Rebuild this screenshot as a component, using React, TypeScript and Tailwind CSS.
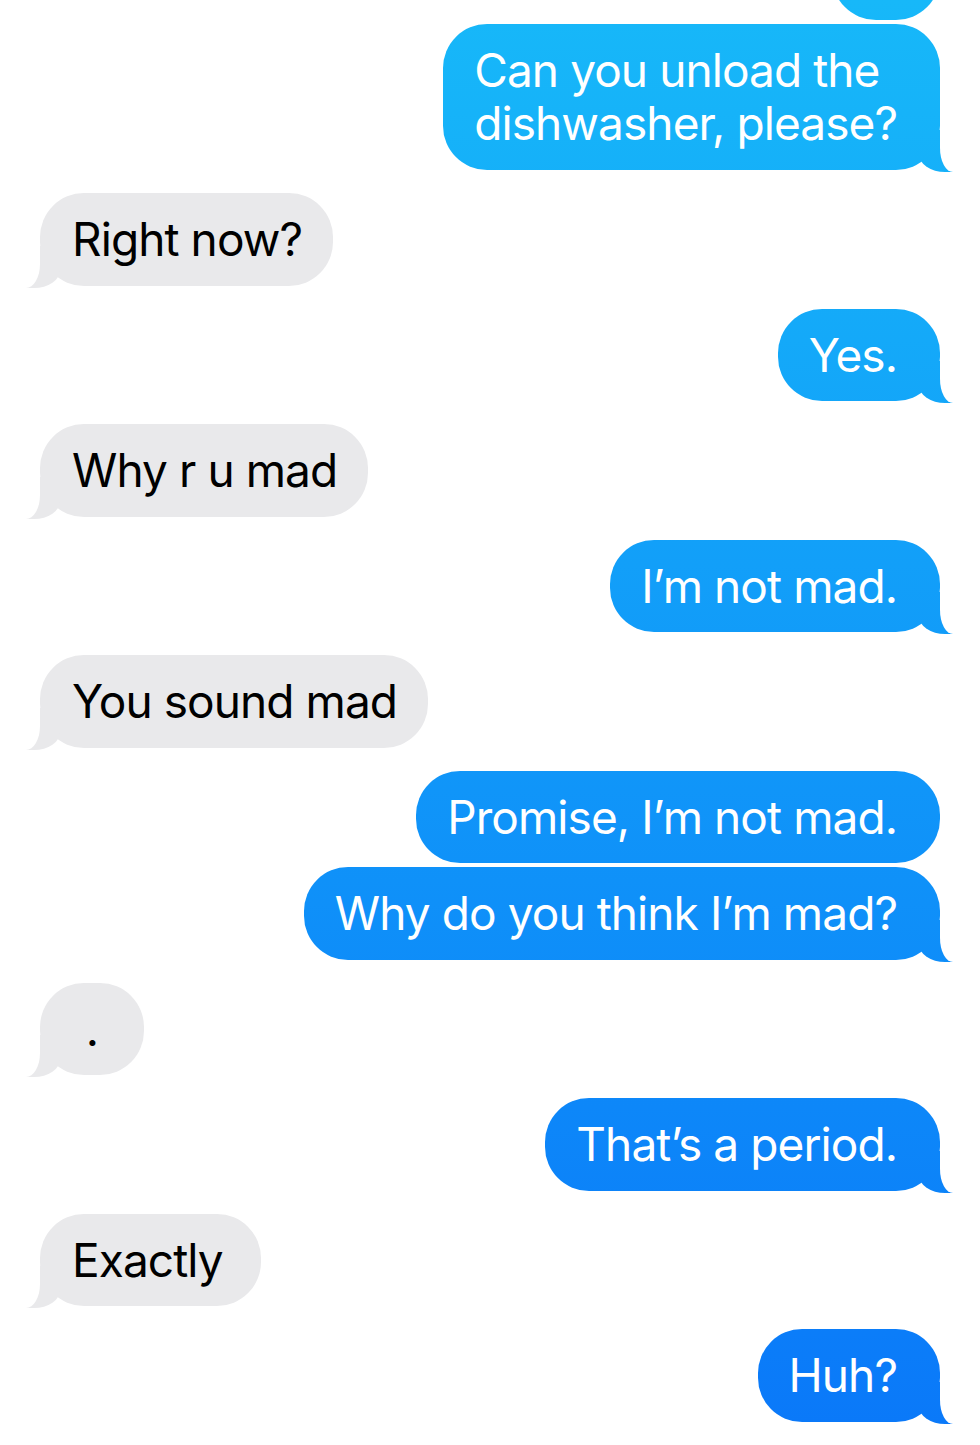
import React from 'react';

type Message = {
  lines: string[];
  fromMe: boolean;
  tail: boolean;
  gap: string;
  extra?: string;
};

const messages: Message[] = [
  // previous message, mostly scrolled off the top
  { lines: [], fromMe: true, tail: false, gap: 'mt-[-73px]', extra: 'h-[93px] w-[108px]' },
  { lines: ['Can you unload the', 'dishwasher, please?'], fromMe: true, tail: true, gap: 'mt-[4px]', extra: 'leading-[53px]' },
  { lines: ['Right now?'], fromMe: false, tail: true, gap: 'mt-[23px]' },
  { lines: ['Yes.'], fromMe: true, tail: true, gap: 'mt-[23px]' },
  { lines: ['Why r u mad'], fromMe: false, tail: true, gap: 'mt-[23px]' },
  { lines: ['I’m not mad.'], fromMe: true, tail: true, gap: 'mt-[23px]' },
  { lines: ['You sound mad'], fromMe: false, tail: true, gap: 'mt-[23px]' },
  { lines: ['Promise, I’m not mad.'], fromMe: true, tail: false, gap: 'mt-[23px]' },
  { lines: ['Why do you think I’m mad?'], fromMe: true, tail: true, gap: 'mt-[4px]' },
  { lines: ['.'], fromMe: false, tail: true, gap: 'mt-[23px]', extra: 'w-[104px] items-center !px-0' },
  { lines: ['That’s a period.'], fromMe: true, tail: true, gap: 'mt-[23px]' },
  { lines: ['Exactly'], fromMe: false, tail: true, gap: 'mt-[23px]', extra: '!pr-[38px]' },
  { lines: ['Huh?'], fromMe: true, tail: true, gap: 'mt-[23px]' },
];

// same gradient for every blue piece, pinned to the viewport so colours line up
const blue = 'bg-fixed bg-[linear-gradient(to_bottom,#17b8f9,#0a78f9)]';

const Bubble = ({ msg }: { msg: Message }) => {
  const { lines, fromMe, tail, gap, extra } = msg;

  return (
    <div className={`flex ${fromMe ? 'justify-end' : 'justify-start'} ${gap}`}>
      <div
        className={`relative flex flex-col rounded-[44px] py-[20px] text-[46px] leading-[52.5px] tracking-[-0.02em] ${
          fromMe ? `${blue} pl-[31px] pr-[43px] text-white` : 'bg-[#e9e9eb] pl-[32px] pr-[31px] text-black'
        } ${extra ?? ''}`}
      >
        {tail && fromMe && (
          <>
            <span className={`absolute bottom-[-2px] right-[-13px] h-[42px] w-[34px] rounded-bl-[26px_18px] ${blue}`} />
            <span className="absolute bottom-[-2px] left-full h-[54px] w-[22px] rounded-bl-[13px_24px] bg-white" />
          </>
        )}
        {tail && !fromMe && (
          <>
            <span className="absolute bottom-[-2px] left-[-14px] h-[42px] w-[34px] rounded-br-[26px_18px] bg-[#e9e9eb]" />
            <span className="absolute bottom-[-2px] right-full h-[54px] w-[22px] rounded-br-[14px_24px] bg-white" />
          </>
        )}
        {lines.map((line) => (
          <span key={line} className="relative whitespace-nowrap">
            {line}
          </span>
        ))}
      </div>
    </div>
  );
};

export default function App() {
  return (
    <div className="h-[1445px] w-[980px] overflow-hidden bg-white font-[Inter,sans-serif]">
      <div className="flex flex-col px-[40px]">
        {messages.map((msg, i) => (
          <Bubble key={i} msg={msg} />
        ))}
      </div>
    </div>
  );
}
